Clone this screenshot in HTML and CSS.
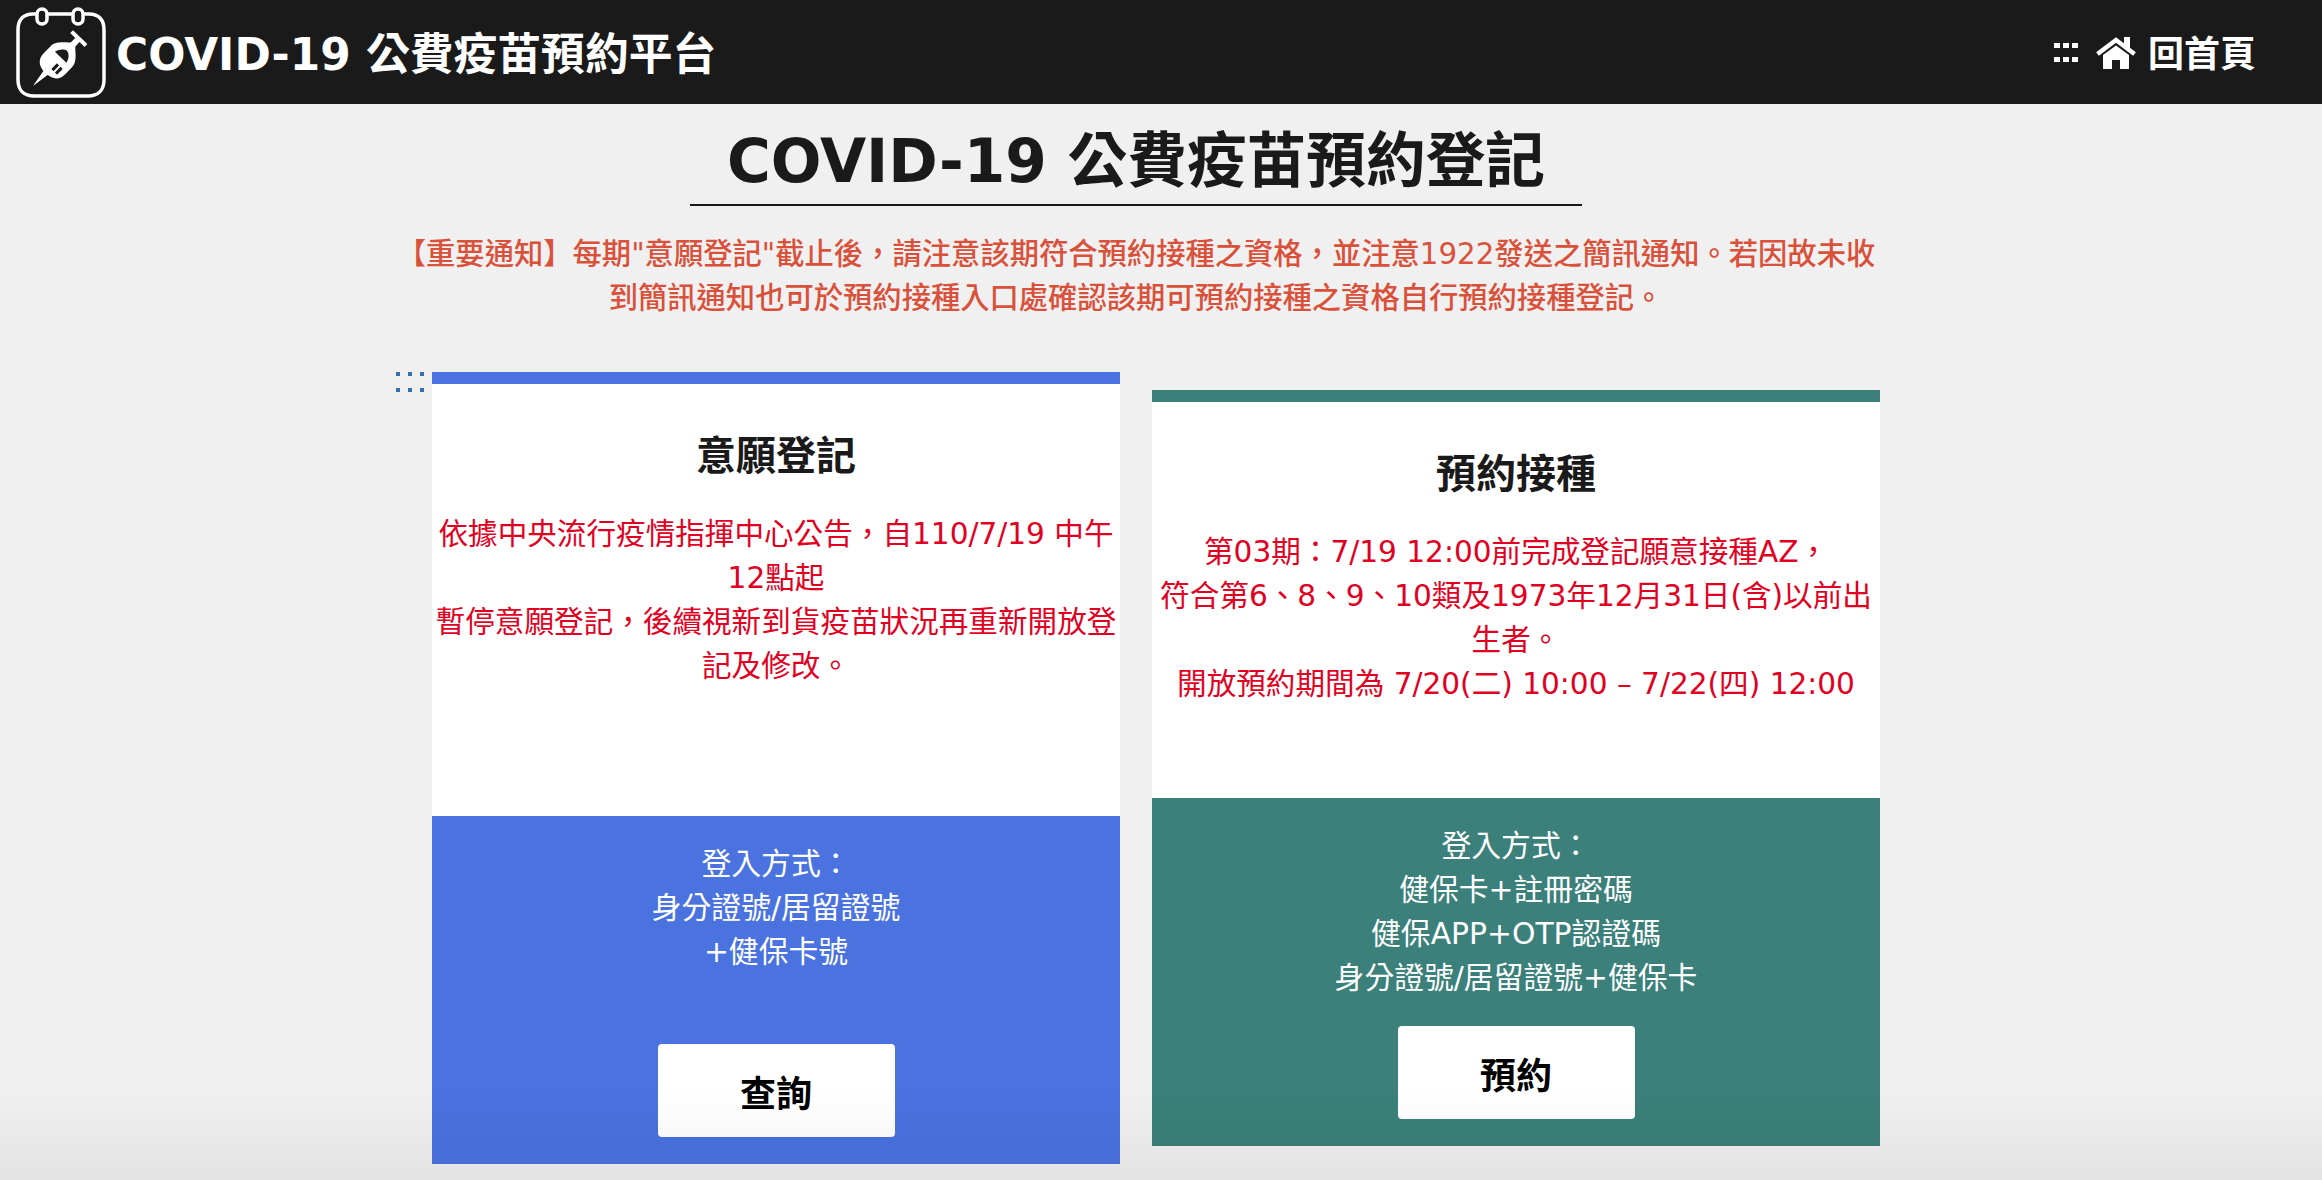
FILE: index.html
```html
<!DOCTYPE html>
<html lang="zh-Hant">
<head>
<meta charset="utf-8">
<title>COVID-19 公費疫苗預約平台</title>
<link rel="stylesheet" href="styles.css">
</head>
<body>
<header class="topbar">
  <a class="brand">
    <svg class="logo" viewBox="0 0 120 104" width="120" height="104">
      <path class="logo-line" d="M37 14 H33 C23 14 18 20 18 30 V80 C18 90 24 96 34 96 H88 C98 96 104 90 104 80 V30 C104 20 99 14 89 14 H84 M47 14 H73"/>
      <rect class="logo-line" x="37" y="9" width="10" height="15" rx="5"/>
      <rect class="logo-line" x="73" y="9" width="10" height="15" rx="5"/>
      <g transform="translate(60 58) rotate(-46)">
        <path class="logo-fill" d="M-21 0 C-21 -10 -16 -15 -8 -15 H2 C10 -15 15 -6 19 -3 H25 V-10 H29 V10 H25 V3 H19 C15 6 10 15 2 15 H-8 C-16 15 -21 10 -21 0 Z"/>
        <path class="logo-fill" d="M-20 -3 L-39 0 L-20 3 Z"/>
        <path class="logo-dark" d="M1 -8 V8 C6 7 10 3 10 0 C10 -3 6 -7 1 -8 Z"/>
        <path class="logo-slit" d="M-14 3 H-6 M-14 8 H-6"/>
      </g>
    </svg>
    <span class="brand-name">COVID-19 公費疫苗預約平台</span>
  </a>
  <nav class="topnav">
    <svg class="dots" viewBox="0 0 24 19" width="24" height="19">
      <path d="M0 0h6v5H0zM9 0h6v5H9zM18 0h6v5h-6zM0 14h6v5H0zM9 14h6v5H9zM18 14h6v5h-6z"/>
    </svg>
    <svg class="home" viewBox="0 0 42 33" width="42" height="33">
      <rect x="29" y="0" width="6" height="11"/>
      <path class="home-roof" d="M2.5 17 L21 3 L39.5 17"/>
      <path d="M8 18 L21 8.5 L34 18 V32 H25 V23 H17 V32 H8 Z"/>
    </svg>
    <span class="nav-label">回首頁</span>
  </nav>
</header>

<main class="page">
  <div class="intro">
    <h1 class="page-title">COVID-19 公費疫苗預約登記</h1>
    <p class="notice">【重要通知】每期"意願登記"截止後，請注意該期符合預約接種之資格，並注意1922發送之簡訊通知。若因故未收到簡訊通知也可於預約接種入口處確認該期可預約接種之資格自行預約接種登記。</p>
  </div>

  <section class="cards">
    <article class="card card-blue">
      <svg class="card-dots" viewBox="0 0 28 22" width="28" height="22">
        <path d="M0 0h4v4H0zM12 0h4v4h-4zM24 0h4v4h-4zM0 16h4v4H0zM12 16h4v4h-4zM24 16h4v4h-4z"/>
      </svg>
      <div class="card-body">
        <h2 class="card-title">意願登記</h2>
        <p class="card-text">依據中央流行疫情指揮中心公告，自110/7/19 中午12點起<br>暫停意願登記，後續視新到貨疫苗狀況再重新開放登記及修改。</p>
      </div>
      <div class="card-foot">
        <p class="foot-text">登入方式：<br>身分證號/居留證號<br>+健保卡號</p>
        <a class="action">查詢</a>
      </div>
    </article>

    <article class="card card-teal">
      <div class="card-body">
        <h2 class="card-title">預約接種</h2>
        <p class="card-text">第03期：7/19 12:00前完成登記願意接種AZ，<br>符合第6、8、9、10類及1973年12月31日(含)以前出生者。<br>開放預約期間為 7/20(二) 10:00 – 7/22(四) 12:00</p>
      </div>
      <div class="card-foot">
        <p class="foot-text">登入方式：<br>健保卡+註冊密碼<br>健保APP+OTP認證碼<br>身分證號/居留證號+健保卡</p>
        <a class="action">預約</a>
      </div>
    </article>
  </section>
</main>
<div class="bottom-fade"></div>
</body>
</html>
```

FILE: styles.css
```css
* { box-sizing: border-box; }
html, body { margin: 0; height: 1180px; overflow: hidden; }
body {
  background: #f0f0f0;
  color: #1a1a1a;
  font-family: "DejaVu Sans", "Noto Sans CJK TC", sans-serif;
}

.topbar {
  display: flex;
  align-items: center;
  height: 104px;
  background: #1a1a1a;
  color: #fff;
  padding-right: 66px;
}
.brand { display: flex; align-items: center; }
.logo { display: block; flex: none; margin-right: -4px; }
.logo-line { fill: none; stroke: #fff; stroke-width: 3.5; }
.logo-fill { fill: #fff; }
.logo-dark { fill: #1a1a1a; }
.logo-slit { fill: none; stroke: #1a1a1a; stroke-width: 3; }
.brand-name { padding-top: 6px; font-size: 43.8px; font-weight: 700; line-height: 1; }

.topnav { display: flex; align-items: center; margin-left: auto; }
.dots { fill: #fff; margin-right: 17px; }
.home { fill: #fff; margin-right: 11px; margin-top: 2px; }
.home-roof { fill: none; stroke: #fff; stroke-width: 4.5; }
.nav-label { padding-top: 6px; font-size: 36px; font-weight: 700; line-height: 1; }

.intro {
  display: flex;
  flex-direction: column;
  align-items: center;
  width: 2272px;
}
.page-title {
  width: 892px;
  margin: 0;
  height: 102px;
  padding-top: 22px;
  border-bottom: 2px solid #1a1a1a;
  font-size: 59.7px;
  font-weight: 700;
  line-height: 72px;
  text-align: center;
}
.notice {
  width: 1500px;
  margin: 26px 0 0;
  color: #d9513a;
  font-size: 29.3px;
  font-weight: 500;
  line-height: 44px;
  text-align: center;
}

.cards {
  display: flex;
  align-items: flex-start;
  gap: 32px;
  margin-top: 52px;
  padding-left: 432px;
}
.card { position: relative; flex: none; border-top: 12px solid; }
.card-blue { width: 688px; border-color: #4a73e0; }
.card-teal { width: 728px; margin-top: 18px; border-color: #3b807a; }
.card-dots { position: absolute; left: -36px; top: -12px; fill: #3572a8; }

.card-body { background: #fff; padding: 44px 0 0; text-align: center; }
.card-blue .card-body { height: 432px; }
.card-teal .card-body { height: 396px; }
.card-title {
  margin: 0;
  font-size: 40px;
  font-weight: 700;
  line-height: 56px;
}
.card-text {
  margin: 28px 0 0;
  color: #e1001f;
  font-size: 29.6px;
  line-height: 44px;
}
.card-teal .card-text { padding: 0 4px; }

.card-foot {
  display: flex;
  flex-direction: column;
  align-items: center;
  justify-content: space-between;
  height: 348px;
  padding: 26px 0 27px;
  color: #fff;
  text-align: center;
}
.card-blue .card-foot { background: #4a73e0; }
.card-teal .card-foot { background: #3b807a; }
.foot-text { margin: 0; font-size: 29.8px; line-height: 44px; }

.action {
  display: flex;
  align-items: center;
  justify-content: center;
  width: 237px;
  height: 93px;
  border-radius: 4px;
  background: #fff;
  color: #000;
  font-size: 36px;
  font-weight: 700;
}

.bottom-fade {
  position: fixed;
  left: 0;
  right: 0;
  bottom: 0;
  height: 90px;
  background: linear-gradient(to bottom, rgba(0,0,0,0), rgba(0,0,0,0.05));
  pointer-events: none;
}
```
